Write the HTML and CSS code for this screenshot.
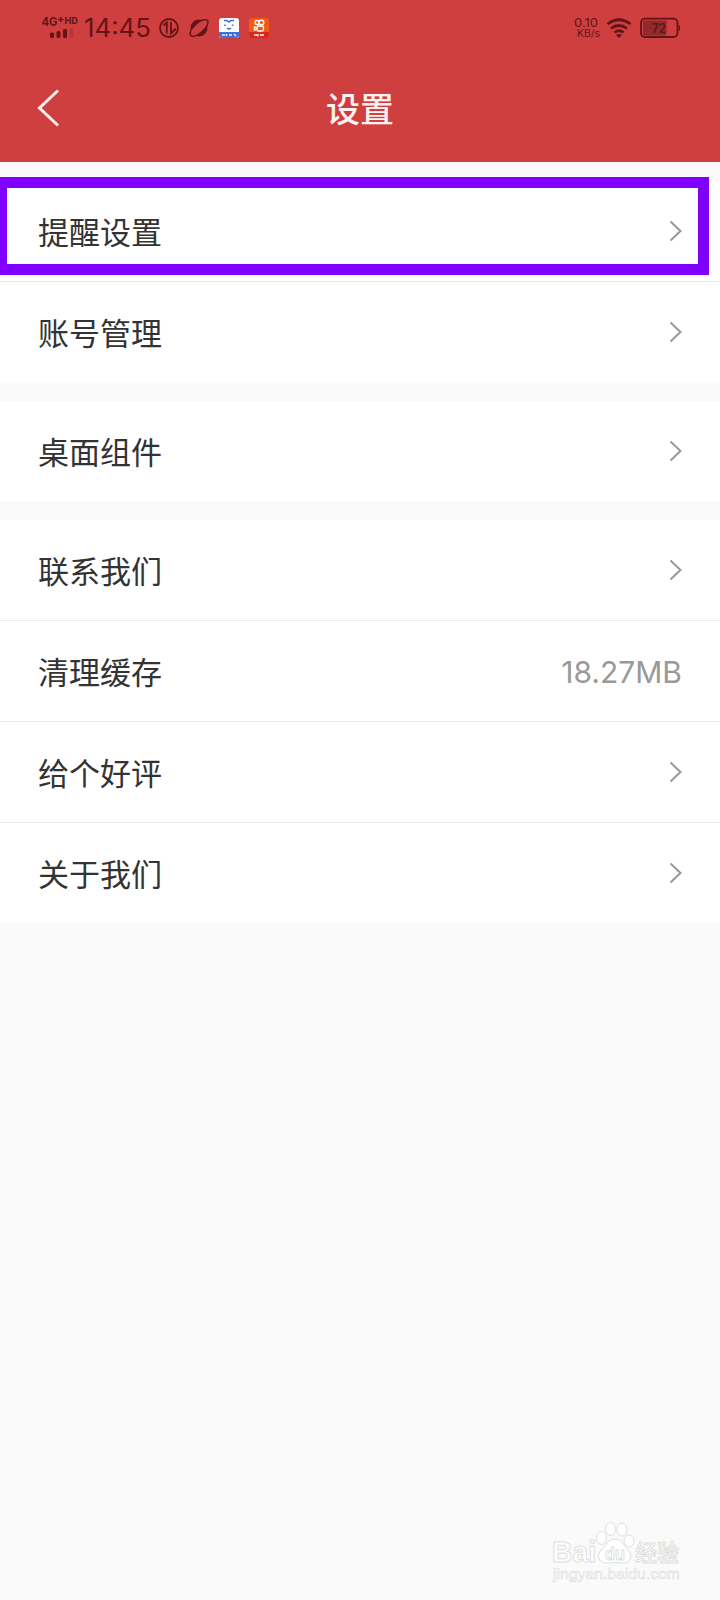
FILE: index.html
```html
<!DOCTYPE html>
<html lang="zh-CN">
<head>
<meta charset="utf-8">
<title>设置</title>
<link rel="stylesheet" href="styles.css">
</head>
<body>
<main class="screen">
  <header class="header">
    <div class="status">
      <svg class="status-left" width="240" height="50" viewBox="40 0 240 50">
        <g class="ink">
          <text x="41.500" y="26" class="net" textLength="16" lengthAdjust="spacingAndGlyphs">4G</text>
          <path d="M58 19.500h5.500M60.750 17v5" class="plus"/>
          <text x="64.500" y="24" class="hd" textLength="13.500" lengthAdjust="spacingAndGlyphs">HD</text>
          <rect x="50" y="32.500" width="4" height="5.500" rx="1.500"/>
          <rect x="56.500" y="31" width="4" height="7" rx="1.500"/>
          <rect x="63" y="29" width="4" height="9" rx="1.500"/>
          <rect x="69.500" y="28" width="4" height="10" rx="1.500" opacity=".2"/>
          <text x="84" y="37" class="time" textLength="67" lengthAdjust="spacingAndGlyphs">14:45</text>
        </g>
        <circle cx="169" cy="28" r="9" class="line"/>
        <path d="M163.500 25.500l3.300-3v11M171 22v11.500l5-5" class="line"/>
        <circle cx="199" cy="28" r="8.500" class="ink"/>
        <ellipse cx="199" cy="28" rx="11.300" ry="4.800" transform="rotate(-42 199 28)" fill="#cf3f3f" class="thin"/>
        <rect x="219" y="18" width="20" height="20" rx="3" fill="#fff"/>
        <path d="M219 32h20v3q0 3-3 3h-14q-3 0-3-3z" fill="#3e72d8"/>
        <path d="M224 20.500h3l2 1.500 2-1.500h3M225 24.500v1.500M232.500 24.500v1.500M227 28q2 2 4 0" fill="none" stroke="#3570c5" stroke-width="1.500"/>
        <path d="M222 35h3M226.500 34v2M229 35h3M234 34l2 2" stroke="#e4edff" stroke-width="1.500"/>
        <rect x="249" y="18" width="20" height="20" rx="3" fill="#f25a1c"/>
        <path d="M249 32h20v3q0 3-3 3h-14q-3 0-3-3z" fill="#da2718"/>
        <g fill="none" stroke="#fff" stroke-width="1.300">
          <circle cx="257" cy="22.500" r="2"/><circle cx="261.500" cy="22.500" r="2.300"/>
          <rect x="257" y="26" width="6.500" height="5" rx="1.500"/><path d="M257 28l-2.500-1v3l2.500-1"/>
          <path d="M254 35h3M258 34v2.500M260 35h4"/>
        </g>
      </svg>
      <svg class="status-right" width="110" height="50" viewBox="570 0 110 50">
        <g class="ink">
          <text x="574" y="27" class="speed" textLength="24" lengthAdjust="spacingAndGlyphs">0.10</text>
          <text x="577" y="37" class="unit" textLength="23" lengthAdjust="spacingAndGlyphs">KB/s</text>
        </g>
        <g fill="none" stroke="#621416" stroke-width="2.700">
          <path d="M607.500 24q11.500-8.500 23 0M611 28.500q8-6 16 0M614.500 32.500q4.500-3.500 9 0"/>
        </g>
        <path d="M616 35q3-2 6 0l-3 3z" class="ink"/>
        <rect x="643" y="20.500" width="23.500" height="15" fill="#912a2c"/>
        <rect x="641" y="18.700" width="36.500" height="18.300" rx="4" class="line"/>
        <path d="M679.300 25.500v5" stroke="#621416" stroke-width="1.200"/>
        <text x="652" y="32.500" class="ink battery" textLength="14" lengthAdjust="spacingAndGlyphs">72</text>
      </svg>
    </div>
    <div class="nav">
      <svg class="back" width="24" height="38" viewBox="0 0 24 38"><path d="M22 1.500L3.500 19l18.500 17.500"/></svg>
      <h1 class="title">设置</h1>
    </div>
  </header>

  <section class="group first">
    <div class="row"><span>提醒设置</span><svg class="arrow" viewBox="0 0 13 22"><path d="M1.500 1.500L11.500 11 1.500 20.500"/></svg></div>
    <div class="row"><span>账号管理</span><svg class="arrow" viewBox="0 0 13 22"><path d="M1.500 1.500L11.500 11 1.500 20.500"/></svg></div>
    <div class="highlight"></div>
  </section>
  <section class="group">
    <div class="row"><span>桌面组件</span><svg class="arrow" viewBox="0 0 13 22"><path d="M1.500 1.500L11.500 11 1.500 20.500"/></svg></div>
  </section>
  <section class="group">
    <div class="row"><span>联系我们</span><svg class="arrow" viewBox="0 0 13 22"><path d="M1.500 1.500L11.500 11 1.500 20.500"/></svg></div>
    <div class="row"><span>清理缓存</span><span class="value">18.27MB</span></div>
    <div class="row"><span>给个好评</span><svg class="arrow" viewBox="0 0 13 22"><path d="M1.500 1.500L11.500 11 1.500 20.500"/></svg></div>
    <div class="row"><span>关于我们</span><svg class="arrow" viewBox="0 0 13 22"><path d="M1.500 1.500L11.500 11 1.500 20.500"/></svg></div>
  </section>

  <svg class="watermark" width="140" height="65" viewBox="548 1518 140 65">
    <text x="552" y="1562" class="mark latin" textLength="44" lengthAdjust="spacingAndGlyphs">Bai</text>
    <g class="paw">
      <ellipse cx="601.500" cy="1538" rx="5" ry="6.500"/>
      <ellipse cx="610.500" cy="1529" rx="5" ry="6.500"/>
      <ellipse cx="622" cy="1529.500" rx="5" ry="6.500"/>
      <ellipse cx="629" cy="1541" rx="5" ry="6"/>
      <path d="M615 1539c-7 0-8 6-13 10-6 5-4 14 4 14 5 0 12-1 17 0 8 1 10-8 5-13-4-4-6-11-13-11z"/>
    </g>
    <text x="605" y="1560" class="mark du" textLength="20" lengthAdjust="spacingAndGlyphs">du</text>
    <text x="635" y="1561" class="mark hanzi" textLength="44" lengthAdjust="spacingAndGlyphs">经验</text>
    <text x="553" y="1579" class="mark site" textLength="127" lengthAdjust="spacingAndGlyphs">jingyan.baidu.com</text>
  </svg>
</main>
</body>
</html>
```
FILE: styles.css
```css
* { box-sizing: border-box; }
body { margin: 0; background: #fafafa; font-family: "Noto Sans CJK SC", sans-serif; }
.screen { position: relative; width: 720px; height: 1600px; overflow: hidden; background: #fafafa; }
.header { height: 162px; background: #cf3f3f; }
.status { display: flex; justify-content: space-between; height: 50px; padding: 0 40px; }
.status text { font-family: Inter, sans-serif; }
.ink { fill: #621416; }
.line { fill: none; stroke: #621416; stroke-width: 1.8; }
.thin { stroke: #621416; stroke-width: 1.4; }
.status .net { font-size: 12px; font-weight: 700; }
.plus { stroke: #621416; stroke-width: 1.5; }
.status .hd { font-size: 9.5px; font-weight: 700; }
.status .time { font-size: 25px; font-weight: 400; }
.status .speed { font-size: 12px; }
.status .unit { font-size: 10px; }
.status .battery { font-size: 12.5px; font-weight: 600; }
.nav { display: grid; grid-template-columns: 72px 1fr 72px; align-items: center; height: 116px; }
.back { margin-left: 36px; }
.back path { fill: none; stroke: #fff1ef; stroke-width: 3; }
.title { margin: 0; color: #fff1ef; font-size: 34px; line-height: 50px; font-weight: 500; text-align: center; }
.group { margin-top: 19px; background: #fff; }
.group.first { position: relative; }
.row { display: flex; justify-content: space-between; align-items: center; height: 100px; padding: 0 38px; color: #333; font-size: 31px; line-height: 46px; }
.row + .row { height: 101px; border-top: 1px solid #ebebeb; }
.row > span:first-child { margin-top: -1px; }
.arrow { width: 13px; height: 22px; }
.arrow path { fill: none; stroke: #999; stroke-width: 2; }
.value { color: #999; font-family: Inter, sans-serif; font-size: 30px; padding-top: 2px; }
.highlight { position: absolute; left: -4px; top: -4px; width: 713px; height: 98px; border: 11.5px solid #8000ff; }
.watermark { position: absolute; left: 548px; top: 1518px; }
.mark, .paw { fill: #fff; stroke: #dedede; stroke-width: 1; }
.latin { font: bold 29px "Liberation Sans", sans-serif; }
.du { font: bold 19px "Liberation Sans", sans-serif; }
.hanzi { font: 500 23px "Noto Sans CJK SC", sans-serif; }
.mark.site { font: 15px "Liberation Sans", sans-serif; stroke-width: .6; }
```
